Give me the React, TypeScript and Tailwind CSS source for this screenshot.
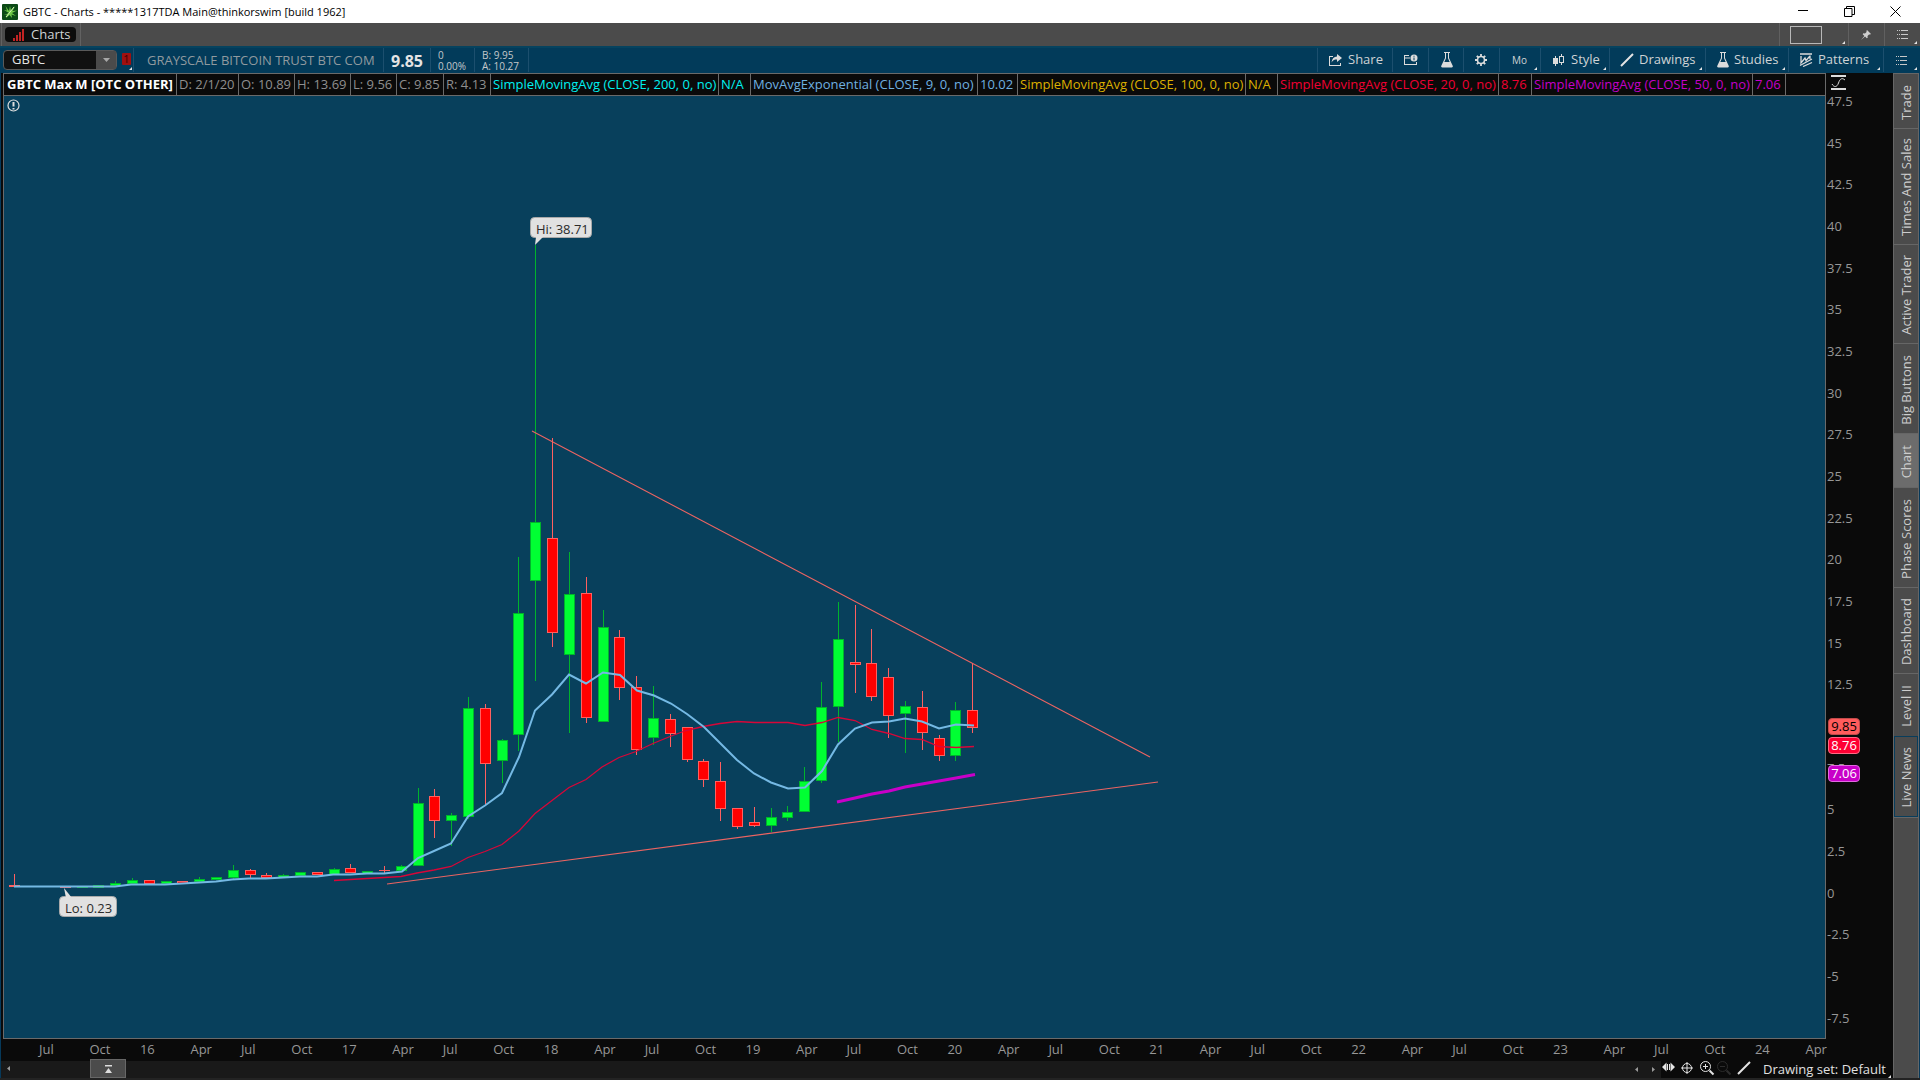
import type { ReactNode } from 'react';
import clsx from 'clsx';

type Candle = [up: boolean, high: number, top: number, bottom: number, low: number];
type Point = [x: number, y: number];

// one candle per month, May 2015 to February 2020, in chart pixels
const candles: Candle[] = [
  [false, 874, 885, 887, 887],
  [true, 886, 886, 887, 887],
  [true, 886, 886, 887, 887],
  [false, 886, 887, 888, 888],
  [true, 887, 887, 888, 888],
  [true, 885, 885, 888, 888],
  [true, 881, 883, 886, 886],
  [true, 878, 880, 884, 884],
  [false, 880, 880, 884, 884],
  [true, 881, 881, 884, 884],
  [false, 881, 881, 884, 884],
  [true, 877, 879, 882, 882],
  [true, 877, 877, 880, 880],
  [true, 865, 870, 878, 879],
  [false, 869, 870, 875, 878],
  [false, 873, 875, 878, 879],
  [true, 874, 875, 878, 878],
  [true, 872, 872, 876, 876],
  [false, 872, 872, 875, 875],
  [true, 868, 869, 875, 875],
  [false, 864, 868, 873, 873],
  [true, 871, 871, 874, 874],
  [false, 866, 870, 871, 874],
  [true, 865, 866, 871, 871],
  [true, 788, 803, 866, 866],
  [false, 789, 796, 821, 838],
  [true, 813, 815, 821, 846],
  [true, 697, 708, 817, 819],
  [false, 704, 708, 764, 805],
  [true, 739, 740, 761, 783],
  [true, 557, 613, 735, 751],
  [true, 245, 522, 581, 681],
  [false, 438, 538, 633, 647],
  [true, 552, 594, 655, 733],
  [false, 577, 593, 718, 723],
  [true, 610, 627, 722, 722],
  [false, 630, 637, 688, 700],
  [false, 676, 687, 750, 755],
  [true, 686, 718, 738, 745],
  [false, 714, 719, 734, 747],
  [false, 727, 727, 760, 762],
  [false, 759, 761, 780, 787],
  [false, 762, 781, 809, 821],
  [false, 808, 808, 827, 829],
  [false, 807, 822, 826, 827],
  [true, 808, 817, 826, 832],
  [true, 806, 812, 818, 821],
  [true, 767, 781, 812, 812],
  [true, 682, 707, 781, 783],
  [true, 602, 639, 707, 742],
  [false, 605, 662, 665, 693],
  [false, 629, 663, 697, 701],
  [false, 668, 677, 716, 738],
  [true, 701, 706, 714, 753],
  [false, 691, 707, 733, 750],
  [false, 735, 738, 756, 761],
  [true, 702, 710, 756, 761],
  [false, 663, 710, 728, 733],
];

const candleX = (i: number) => Math.round(14.3 + i * 16.806);

const ema: Point[] = [
  [14, 886.5], [115, 886.5], [131, 884.5], [165, 884.5], [182, 883.5], [199, 882.5], [216, 881.5], [232, 879.5],
  [249, 878.5], [266, 878.5], [283, 877.5], [300, 876.5], [317, 876.5], [333, 874.5], [350, 874.5], [367, 873.5],
  [384, 873.5], [402, 871.5], [418, 858], [434, 851], [451, 843.5], [468, 816.5], [485, 805.5], [502, 793],
  [519, 757], [535, 710.5], [552, 694.5], [569, 674.5], [586, 683.5], [603, 672.5], [620, 675], [637, 690.5],
  [654, 695.5], [671, 703.5], [687, 714], [704, 727], [720, 743], [737, 760], [754, 773.5], [771, 782.5],
  [788, 788.5], [805, 787.5], [822, 771], [838, 744.5], [855, 728.5], [872, 722.5], [889, 721.5], [905, 718.5],
  [922, 721.5], [939, 728.5], [956, 724.5], [974, 725.5],
];

const sma20: Point[] = [
  [334, 880.5], [384, 877.5], [401, 876.5], [417, 873], [434, 870], [451, 866.5], [468, 857.5], [485, 851.5],
  [502, 844.5], [519, 831], [535, 813.5], [552, 800.5], [569, 787.5], [586, 779.5], [602, 767], [619, 757.5],
  [636, 751.5], [653, 743.5], [670, 736.5], [686, 730.5], [703, 726.5], [720, 723.5], [737, 721.5], [755, 722.5],
  [788, 722.5], [805, 725.5], [822, 722.5], [838, 717.5], [855, 720.5], [872, 729.5], [889, 733.5], [905, 738.5],
  [922, 739.5], [939, 746.5], [956, 747.5], [974, 746.5],
];

const sma50: Point[] = [
  [837, 802], [855, 798], [872, 794], [889, 791], [905, 787], [922, 784], [939, 781], [956, 778], [975, 774.5],
];

const toPoints = (line: Point[]) => line.map((p) => p.join(',')).join(' ');

const studies = [
  { label: 'D: 2/1/20', color: 'text-[#8f8f8f]', width: 'w-[62px]' },
  { label: 'O: 10.89', color: 'text-[#8f8f8f]', width: 'w-14' },
  { label: 'H: 13.69', color: 'text-[#8f8f8f]', width: 'w-14' },
  { label: 'L: 9.56', color: 'text-[#8f8f8f]', width: 'w-[46px]' },
  { label: 'C: 9.85', color: 'text-[#8f8f8f]', width: 'w-[47px]' },
  { label: 'R: 4.13', color: 'text-[#8f8f8f]', width: 'w-[47px]' },
  { label: 'SimpleMovingAvg (CLOSE, 200, 0, no)', color: 'text-[#00f0f0]', width: 'w-[228px]' },
  { label: 'N/A', color: 'text-[#00f0f0]', width: 'w-8' },
  { label: 'MovAvgExponential (CLOSE, 9, 0, no)', color: 'text-[#6fb0e0]', width: 'w-[227px]' },
  { label: '10.02', color: 'text-[#6fb0e0]', width: 'w-10' },
  { label: 'SimpleMovingAvg (CLOSE, 100, 0, no)', color: 'text-[#dcb000]', width: 'w-[228px]' },
  { label: 'N/A', color: 'text-[#dcb000]', width: 'w-8' },
  { label: 'SimpleMovingAvg (CLOSE, 20, 0, no)', color: 'text-[#f00032]', width: 'w-[221px]' },
  { label: '8.76', color: 'text-[#f00032]', width: 'w-[33px]' },
  { label: 'SimpleMovingAvg (CLOSE, 50, 0, no)', color: 'text-[#c400c8]', width: 'w-[221px]' },
  { label: '7.06', color: 'text-[#c400c8]', width: 'w-[33px]' },
];

const prices = [
  '47.5', '45', '42.5', '40', '37.5', '35', '32.5', '30', '27.5', '25', '22.5', '20', '17.5', '15', '12.5', '',
  '7.5', '5', '2.5', '0', '-2.5', '-5', '-7.5',
];

const dates = [
  'Jul', 'Oct', '16', 'Apr', 'Jul', 'Oct', '17', 'Apr', 'Jul', 'Oct', '18', 'Apr', 'Jul', 'Oct', '19', 'Apr', 'Jul',
  'Oct', '20', 'Apr', 'Jul', 'Oct', '21', 'Apr', 'Jul', 'Oct', '22', 'Apr', 'Jul', 'Oct', '23', 'Apr', 'Jul', 'Oct',
  '24', 'Apr',
];

const gadgets = [
  { label: 'Trade', height: 'h-[55px]' },
  { label: 'Times And Sales', height: 'h-[116px]' },
  { label: 'Active Trader', height: 'h-[99px]' },
  { label: 'Big Buttons', height: 'h-[90px]' },
  { label: 'Chart', height: 'h-[54px]', active: true },
  { label: 'Phase Scores', height: 'h-[100px]' },
  { label: 'Dashboard', height: 'h-[86px]' },
  { label: 'Level II', height: 'h-[63px]' },
  { label: 'Live News', height: 'h-[81px]', outlined: true },
];

const Corner = () => (
  <svg className="absolute right-[3px] bottom-0.5 size-[3px] fill-[#e4e4e4]" viewBox="0 0 3 3">
    <path d="M3 0v3H0z" />
  </svg>
);

const FlaskIcon = () => (
  <svg className="h-4 w-3.5 fill-[#dcdcdc]" viewBox="0 0 14 16">
    <path d="M4 0h6v1H9v5l3.600 7.600c.6 1.200 0 1.900-1 1.900H2.400c-1 0-1.600-.7-1-1.900L5 6V1H4zM6 1v5.300L4.300 10h5.400L8 6.300V1z" fillRule="evenodd" />
  </svg>
);

const LineIcon = () => (
  <svg className="size-3.5 stroke-[#e4e4e4] stroke-2" viewBox="0 0 14 14">
    <path d="M1 13 13 1" />
  </svg>
);

const ListIcon = () => (
  <svg className="h-[11px] w-[11px] fill-[#c8c8c8]" viewBox="0 0 11 11">
    <path d="M0 1h1v1H0zM0 5h1v1H0zM0 9h1v1H0zM4 1h7v1H4zM4 5h7v1H4zM4 9h7v1H4zM2 1h1v1H2zM2 5h1v1H2zM2 9h1v1H2z" />
  </svg>
);

type ToolButtonProps = {
  width: string;
  name?: string;
  icon?: ReactNode;
  menu?: boolean;
  children?: ReactNode;
};

const ToolButton = ({ width, name, icon, menu, children }: ToolButtonProps) => (
  <button
    type="button"
    aria-label={name}
    className={clsx('relative flex h-6 items-center gap-1.5 border-l border-[#1c4f6e] whitespace-nowrap', width)}
  >
    {icon}
    {children}
    {menu && <Corner />}
  </button>
);

const TitleBar = () => (
  <header className="flex h-[23px] shrink-0 items-center bg-white pr-[19px] pl-0.5 text-black">
    <svg className="size-4 shrink-0" viewBox="0 0 16 16">
      <rect width="16" height="16" rx="1" fill="#0c4a16" />
      <path d="M7 9 2 6l3 .5L3.500 2 7 7l1-5 1 4.500L13 2l-2.500 5L15 6.500 10 9l4 3-4.500-1.500L10 14l-2.500-3L4 14l1.500-3.500L2 11z" fill="#6fc848" />
      <path d="m4 13 8-10" stroke="#d8f5b8" />
    </svg>
    <h1 className="ml-[5px] flex-1 text-[11px] leading-4">GBTC - Charts - *****1317TDA Main@thinkorswim [build 1962]</h1>
    <div className="flex gap-[35px]">
      <button type="button" aria-label="Minimize">
        <svg className="size-[11px] stroke-black" viewBox="0 0 11 11"><path d="M0 4.500h10" /></svg>
      </button>
      <button type="button" aria-label="Restore">
        <svg className="size-[11px] fill-none stroke-black" viewBox="0 0 11 11">
          <path d="M.5 2.500h7.500v8H.5zM2.500 2.500v-2h8v8H8" />
        </svg>
      </button>
      <button type="button" aria-label="Close">
        <svg className="size-[11px] stroke-black" viewBox="0 0 11 11"><path d="m.5.5 10 10M10.500.5l-10 10" /></svg>
      </button>
    </div>
  </header>
);

const TabBar = () => (
  <nav className="flex h-[23px] shrink-0 justify-between bg-[#4b4b4b] pl-px text-[13px]">
    <div className="flex w-20 items-start border-r border-l border-[#626262] pt-1 pl-[3px]">
      <button type="button" className="flex h-[15px] w-[71px] items-center gap-1.5 rounded bg-[#0c0c0c] pl-2 leading-[15px]">
        <svg className="h-3 w-3 fill-[#c22323]" viewBox="0 0 12 12">
          <path d="M0 9h2v3H0zM3 6h2v6H3zM6 3h2v9H6zM9 0h2v12H9z" />
        </svg>
        Charts
      </button>
    </div>
    <div className="flex">
      <button type="button" aria-label="Window layout" className="relative w-[69px] border-l border-[#606060] pl-2.5">
        <span className="block h-[18px] w-8 border border-[#b8b8b8]" />
        <Corner />
      </button>
      <button type="button" aria-label="Pin" className="flex w-9 items-center border-l border-[#606060] pl-3">
        <svg className="size-2.5 fill-[#cfcfcf]" viewBox="0 0 10 10">
          <path d="m6 0 4 4-1 .6-1-.2L6.500 6l.2 1.700-.9.6-1.700-1.700L0 10l3.400-4-1.700-1.800.6-.9L4 3.500 5.600 2l-.2-1z" />
        </svg>
      </button>
      <button type="button" aria-label="Menu" className="relative flex w-9 items-center border-l border-[#606060] pl-3">
        <ListIcon />
        <Corner />
      </button>
    </div>
  </nav>
);

const QuoteBar = () => (
  <div className="flex h-[27px] shrink-0 items-start border-t-2 border-[#06435f] bg-[#023b5a] pl-[3px] text-[13px]">
    <div className="mt-0.5 flex h-5 w-[114px] rounded-sm border border-[#5a5a5a] bg-[#111]">
      <input
        aria-label="Symbol"
        defaultValue="GBTC"
        className="min-w-0 flex-1 bg-transparent pl-2 text-[13px] text-[#e4e4e4] outline-none"
      />
      <button type="button" aria-label="Symbol list" className="grid w-5 place-items-center bg-[#4b4b4b]">
        <svg className="h-1 w-[7px] fill-[#a8a8a8]" viewBox="0 0 7 4"><path d="M0 0h7L3.500 4z" /></svg>
      </button>
    </div>
    <button type="button" aria-label="Link group 1" className="relative ml-[5px] flex h-6 w-[11px] items-start pt-[5px]">
      <span className="h-3 w-[9px] rounded-[1px] bg-[#a01010] text-center text-[11px] leading-3 text-[#3a0000]">1</span>
      <svg className="absolute right-px bottom-0.5 size-[3px] fill-[#e4e4e4]" viewBox="0 0 3 3"><path d="M3 0v3H0z" /></svg>
    </button>
    <p className="flex h-6 w-[250px] items-center border-l border-[#1c4f6e] pt-px pl-[13px] whitespace-nowrap text-[#909a9f]">
      GRAYSCALE BITCOIN TRUST BTC COM
    </p>
    <p className="flex h-6 w-[47px] items-center border-l border-[#1c4f6e] pt-px pl-[7px] text-[16px] font-bold text-[#e4e4e4]">9.85</p>
    <p className="flex h-6 w-11 flex-col border-l border-[#1c4f6e] pt-0.5 pl-[7px] text-[10px] leading-[11px] text-[#c4c8ca]">
      <span>0</span>
      <span>0.00%</span>
    </p>
    <p className="flex h-6 w-[55px] flex-col border-r border-l border-[#1c4f6e] pt-0.5 pl-[7px] text-[10px] leading-[11px] text-[#c4c8ca]">
      <span>B: 9.95</span>
      <span>A: 10.27</span>
    </p>
    <div className="ml-auto flex">
      <ToolButton
        width="w-[75px] pl-2.5"
        icon={
          <svg className="size-3.5 fill-[#dcdcdc]" viewBox="0 0 14 14">
            <path d="M1 3h4v1H2v8h10v-2h1v3H1z" />
            <path d="M9 1l5 4-5 4V6.500C6.500 6.500 5 7 3.500 9.500 4 5.500 6 3.500 9 3.500z" />
          </svg>
        }
      >
        Share
      </ToolButton>
      <ToolButton
        width="w-9 pl-[11px]"
        name="Notes"
        icon={
          <svg className="size-3.5 fill-[#dcdcdc]" viewBox="0 0 14 14">
            <path d="M0 2h5v1H1v1.500h5v1H1V11h11V9h1v3H0z" />
            <circle cx="10" cy="5" r="3.500" />
            <path d="M9.500 2.800h1v1h-1zM9.500 4.400h1v2.800h-1z" fill="#023b5a" />
          </svg>
        }
      />
      <ToolButton width="w-[35px] pl-[11px]" name="Edit studies" icon={<FlaskIcon />} />
      <ToolButton
        width="w-9 pl-2.5"
        name="Chart settings"
        icon={
          <svg className="size-3.5 fill-none stroke-[#dcdcdc]" viewBox="0 0 14 14">
            <circle cx="7" cy="7" r="3.500" strokeWidth="1.600" />
            <path d="M7 1v2.500M7 10.500V13M1 7h2.500M10.500 7H13M2.800 2.800l1.700 1.700M9.500 9.500l1.700 1.700M2.800 11.200l1.700-1.700M9.500 4.500l1.700-1.700" strokeWidth="1.800" />
          </svg>
        }
      />
      <ToolButton width="w-[41px] pl-3" menu>
        <span className="text-[10px]">Mo</span>
      </ToolButton>
      <ToolButton
        width="w-[69px] pl-3"
        menu
        icon={
          <svg className="h-3.5 w-3 fill-[#dcdcdc]" viewBox="0 0 12 14">
            <path d="M2 3h1v2h2v6H3v2H2v-2H0V5h2zM8 1h1v2h2v7H9v2H8v-2H6V3h2zM7 4v5h3V4z" fillRule="evenodd" />
          </svg>
        }
      >
        Style
      </ToolButton>
      <ToolButton width="w-24 pl-2.5" menu icon={<LineIcon />}>
        <span className="-ml-px">Drawings</span>
      </ToolButton>
      <ToolButton width="w-[83px] pl-2.5" menu icon={<FlaskIcon />}>
        <span className="-ml-0.5">Studies</span>
      </ToolButton>
      <ToolButton
        width="w-[95px] pl-2.5"
        menu
        icon={
          <svg className="h-3.5 w-3.5 fill-none stroke-[#dcdcdc]" viewBox="0 0 14 14">
            <path d="M1 1h12" strokeWidth="1.500" />
            <path d="M2 3v7l4-5 1 2.500L11 3M11 2.500V6M1 12.500 13 6M4 13.500l9-4" strokeWidth="1.300" />
          </svg>
        }
      >
        <span className="-ml-px">Patterns</span>
      </ToolButton>
      <ToolButton width="w-[37px] pl-3" name="Chart menu" menu icon={<ListIcon />} />
    </div>
  </div>
);

type CalloutProps = { x: number; y: number; width: number; tail: string; children: ReactNode };

const Callout = ({ x, y, width, tail, children }: CalloutProps) => (
  <g>
    <rect x={x} y={y} width={width} height="20" rx="4" fill="#e1e1e1" stroke="#a9a9a9" />
    <path d={tail} fill="#e1e1e1" />
    <text x={x + 5.5} y={y + 16} fontSize="13" fill="#2a2a2a">{children}</text>
  </g>
);

const PriceChart = () => (
  <svg
    role="img"
    aria-label="GBTC monthly price chart"
    className="block min-h-0 w-full flex-1 bg-[#08405c]"
    viewBox="4 96 1821 942"
    preserveAspectRatio="none"
  >
    <g fill="none" stroke="#dedede">
      <circle cx="13.500" cy="105.500" r="5.500" strokeWidth="1.200" />
      <path d="M13.500 102v4.500M13.500 108v1.500" strokeWidth="2" />
    </g>

    {candles.map(([up, high, top, bottom, low], i) => {
      const x = candleX(i);
      const height = bottom - top;
      return (
        <g key={i} shapeRendering="crispEdges" fill={up ? '#00b32c' : '#ff6060'}>
          <rect x={x} y={high} width="1" height={Math.max(low - high, 1)} />
          <rect x={x - 5} y={top} width="11" height={height} />
          {height > 2 && (
            <rect x={x - 4} y={top + 1} width="9" height={height - 2} fill={up ? '#00ff33' : '#ff0000'} />
          )}
        </g>
      );
    })}

    <g fill="none">
      <path d="M532 431 1150 757M387 884 1158 782" stroke="#ec6462" strokeWidth="1.100" />
      <polyline points={toPoints(sma20)} stroke="#d80638" strokeWidth="1.300" />
      <polyline points={toPoints(ema)} stroke="#74b9e4" strokeWidth="2" />
      <polyline points={toPoints(sma50)} stroke="#c800c8" strokeWidth="3" />
    </g>

    <Callout x={530.5} y={217.5} width={61} tail="M536 237h7l-8 8z">Hi: 38.71</Callout>
    <Callout x={59.5} y={896.5} width={57} tail="M66 898h6l-8-10z">Lo: 0.23</Callout>
  </svg>
);

const PriceAxis = () => (
  <div className="relative flex w-[67px] flex-col pb-[11px] text-[13px] text-[#979797]">
    <button type="button" aria-label="Scale settings" className="h-[18px] pl-[5px]">
      <svg className="h-4 w-[15px] fill-none stroke-[#dcdcdc]" viewBox="0 0 15 16">
        <path d="M0 2h15M0 15h15" strokeWidth="2" />
        <path d="M1 10c2 3.500 5 3.500 6.500-1S11 3.500 14 6" />
      </svg>
    </button>
    <div className="flex flex-1 flex-col justify-between pl-px leading-5">
      {prices.map((price, i) => (
        <span key={i} className="h-5">{price}</span>
      ))}
    </div>
    <div className="absolute top-[66.800%] left-0.5 w-8 text-center leading-[15px] text-white">
      <span className="block rounded-sm border border-[#c24a4a] bg-[#ff5c5c] text-black">9.85</span>
      <span className="mt-0.5 block rounded-sm border border-[#ff6a86] bg-[#ff0033]">8.76</span>
      <span className="mt-[11px] block rounded-sm border border-[#e06ae0] bg-[#c800c8]">7.06</span>
    </div>
  </div>
);

const ChartFooter = () => (
  <div className="flex h-[17px] shrink-0 items-center">
    <div className="relative flex h-full flex-1 items-center justify-end bg-[#191919] pr-1.5">
      <button type="button" aria-label="Scroll to start" className="absolute top-[5px] left-1.5">
        <svg className="h-[5px] w-[3px] fill-[#9a9a9a]" viewBox="0 0 3 5"><path d="M3 0v5L0 2.500z" /></svg>
      </button>
      <button
        type="button"
        aria-label="Chart range"
        className="absolute -top-0.5 bottom-0 left-[89px] grid w-9 place-items-center border border-[#676767] bg-[#4b4b4b]"
      >
        <svg className="h-2 w-[7px] fill-[#dcdcdc]" viewBox="0 0 7 8"><path d="M0 0h7v1.500H0zM3.500 3 7 8H0z" /></svg>
      </button>
      <button type="button" aria-label="Scroll left" className="mr-3.5">
        <svg className="h-[5px] w-[3px] fill-[#9a9a9a]" viewBox="0 0 3 5"><path d="M3 0v5L0 2.500z" /></svg>
      </button>
      <button type="button" aria-label="Scroll right">
        <svg className="h-[5px] w-[3px] fill-[#9a9a9a]" viewBox="0 0 3 5"><path d="M0 0v5l3-2.500z" /></svg>
      </button>
    </div>
    <div className="flex h-full w-[102px] items-start gap-1.5 pl-px">
      <button type="button" aria-label="Pan">
        <svg className="h-3.5 w-[13px] fill-[#e4e4e4]" viewBox="0 0 13 14">
          <path d="M4.500 1.500v9L0 6zM8.500 1.500v9L13 6zM5 3h1v6H5zM7 3h1v6H7z" />
        </svg>
      </button>
      <button type="button" aria-label="Crosshair">
        <svg className="h-4 w-3 fill-none stroke-[#e4e4e4]" viewBox="0 0 12 16">
          <circle cx="6" cy="7" r="4.500" />
          <path d="M6 1v12M0 7h12" />
        </svg>
      </button>
      <button type="button" aria-label="Zoom in">
        <svg className="size-4 fill-none stroke-[#e4e4e4]" viewBox="0 0 16 16">
          <circle cx="6.500" cy="5.500" r="5" />
          <path d="M6.500 3v5M4 5.500h5" />
          <path d="m10.500 9.500 4 4" strokeWidth="2" />
        </svg>
      </button>
      <button type="button" aria-label="Zoom out" className="-ml-1.5">
        <svg className="size-4 fill-none stroke-[#2c2c2c]" viewBox="0 0 16 16">
          <circle cx="7.500" cy="5.500" r="5" />
          <path d="M5 5.500h5" />
          <path d="m11.500 9.500 4 4" strokeWidth="2" />
        </svg>
      </button>
      <button type="button" aria-label="Draw line"><LineIcon /></button>
    </div>
    <button type="button" className="flex h-[17px] w-[130px] items-start justify-between pr-0.5 text-[13px] leading-4 whitespace-nowrap text-[#e0e0e0]">
      Drawing set: Default
      <svg className="size-[3px] self-end fill-[#e4e4e4]" viewBox="0 0 3 3"><path d="M3 0v3H0z" /></svg>
    </button>
  </div>
);

const GadgetBar = () => (
  <aside className="flex w-[27px] shrink-0 flex-col border-r border-[#06395a]">
    <div className="flex flex-1 flex-col border-r border-l border-[#666] bg-[#4b4b4b] text-[13px] text-[#cdcdcd]">
      {gadgets.map(({ label, height, active, outlined }) => (
        <button
          key={label}
          type="button"
          className={clsx(
            'flex shrink-0 items-center justify-center pt-0.5',
            height,
            active && 'bg-[#6c6c6c]',
            outlined ? 'border border-[#083d5c]' : 'border-t border-[#666]'
          )}
        >
          <span className="rotate-180 leading-4 whitespace-nowrap [writing-mode:vertical-rl]">{label}</span>
        </button>
      ))}
      <div className="flex-1 border-t border-[#666]" />
    </div>
  </aside>
);

export default function App() {
  return (
    <div className="flex h-screen flex-col overflow-hidden bg-[#0a0a0a] font-['Open_Sans','Noto_Sans',sans-serif] text-[#cfd3d5]">
      <TitleBar />
      <TabBar />
      <QuoteBar />
      <main className="flex min-h-0 flex-1 border-l border-[#06395a]">
        <section className="flex min-w-0 flex-1 flex-col">
          <div className="flex min-h-0 flex-1 pl-0.5">
            <div className="flex min-w-0 flex-1 flex-col border border-[#6a6a6a]">
              <div className="flex h-[22px] shrink-0 overflow-hidden border-b border-[#6a6a6a] text-[13px] leading-[21px] whitespace-nowrap">
                <strong className="w-[173px] shrink-0 border-r border-[#6a6a6a] pl-[3px] text-white">GBTC Max M [OTC OTHER]</strong>
                {studies.map(({ label, color, width }, i) => (
                  <span key={i} className={clsx('shrink-0 border-r border-[#6a6a6a] pl-0.5', color, width)}>
                    {label}
                  </span>
                ))}
              </div>
              <PriceChart />
            </div>
            <PriceAxis />
          </div>
          <div className="flex h-[22px] shrink-0 pr-[37px] pl-[38px] text-[13px] leading-5 text-[#979797]">
            {dates.map((date, i) => (
              <span key={i} className="w-0 flex-1 whitespace-nowrap">{date}</span>
            ))}
          </div>
          <ChartFooter />
        </section>
        <GadgetBar />
      </main>
      <footer className="h-0.5 shrink-0 bg-[#232323]" />
    </div>
  );
}
